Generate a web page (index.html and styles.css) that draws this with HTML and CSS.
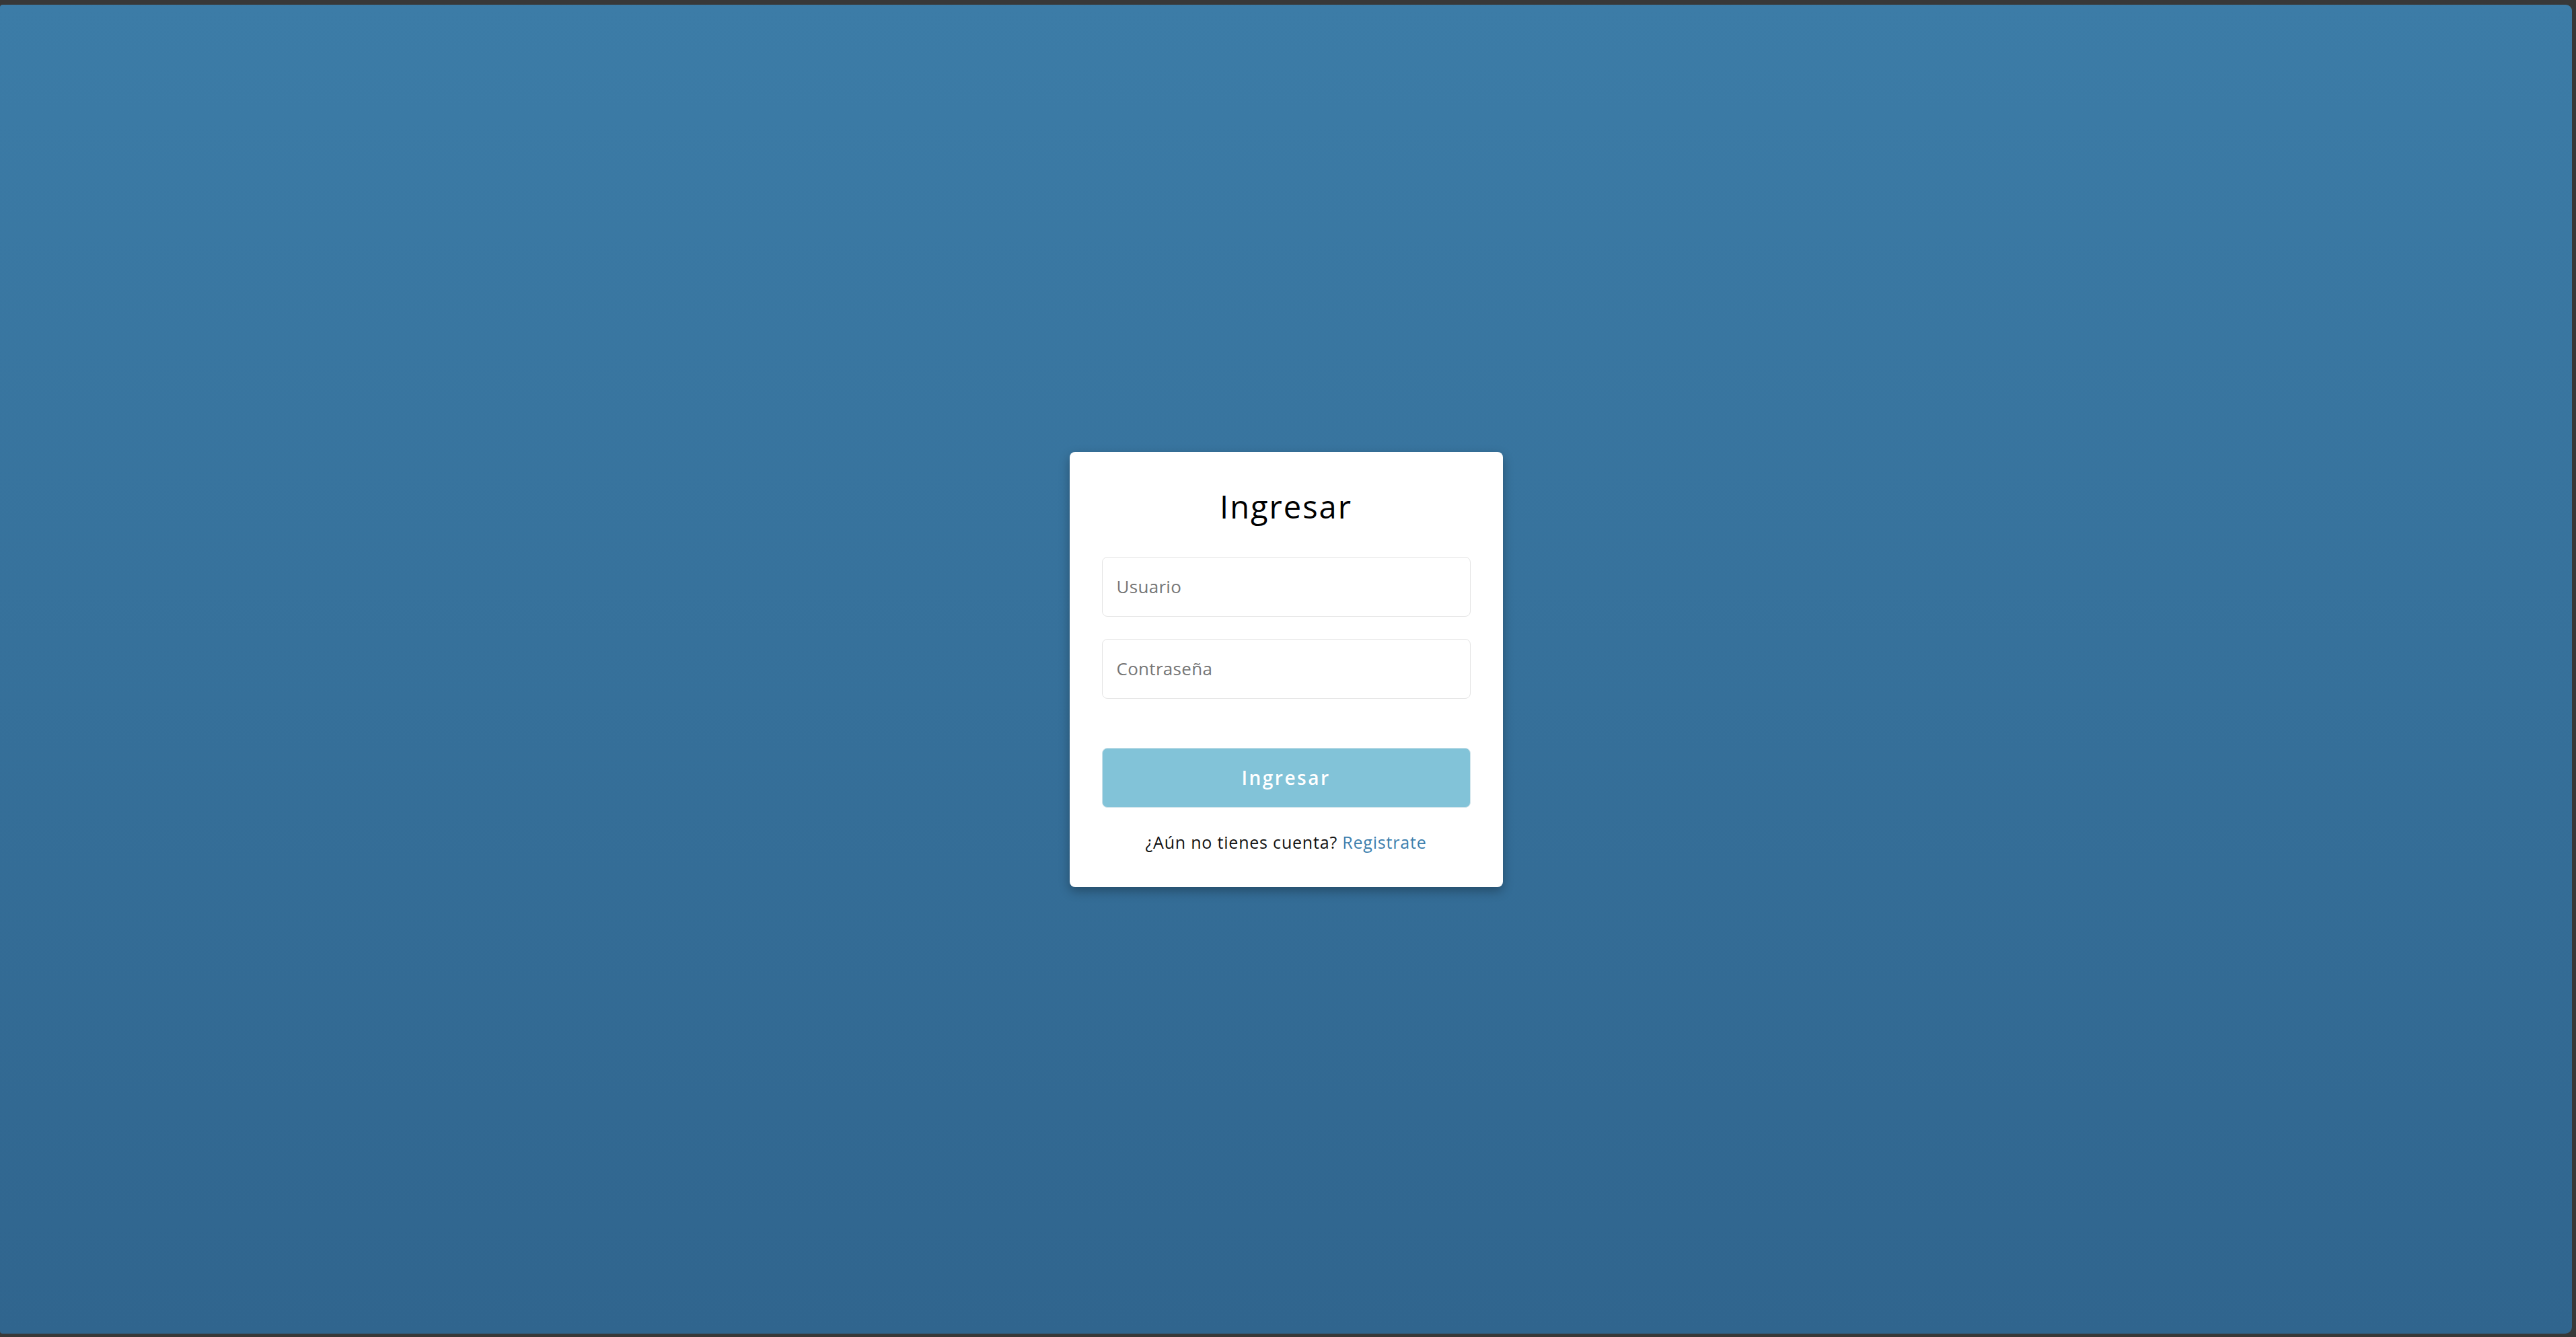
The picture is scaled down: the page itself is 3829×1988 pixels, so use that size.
FILE: index.html
```html
<!DOCTYPE html>
<html lang="es">
<head>
<meta charset="utf-8">
<title>Ingresar</title>
<link rel="stylesheet" href="styles.css">
</head>
<body>
<main class="screen">
  <form class="card">
    <h1 class="title">Ingresar</h1>
    <input class="field" type="text" placeholder="Usuario">
    <input class="field field-pass" type="password" placeholder="Contraseña">
    <button class="submit" type="button">Ingresar</button>
    <p class="signup">¿Aún no tienes cuenta? <a class="signup-link" href="#">Registrate</a></p>
  </form>
</main>
</body>
</html>
```
FILE: styles.css
```css
html, body {
  height: 100%;
}
body {
  margin: 0;
  padding: 7px 6px 5px 0;
  box-sizing: border-box;
  background: #383838;
  font-family: "Open Sans", "Liberation Sans", sans-serif;
}
.screen {
  height: 100%;
  border-radius: 4px 9px 10px 4px;
  background: linear-gradient(180deg, #3c7ca7 0%, #30658e 100%);
  display: flex;
  align-items: center;
  justify-content: center;
}
.card {
  width: 644px;
  box-sizing: border-box;
  padding: 51px 48px 49px;
  background: #ffffff;
  border-radius: 8px;
  box-shadow: 0 6px 16px rgba(0, 0, 0, 0.3);
  display: flex;
  flex-direction: column;
}
.title {
  margin: 0 0 45px;
  font-size: 47px;
  line-height: 60px;
  font-weight: 500;
  letter-spacing: 2px;
  text-align: center;
  color: #000;
}
.field {
  display: block;
  width: 100%;
  height: 89px;
  box-sizing: border-box;
  margin: 0;
  padding: 0 21px;
  border: 1px solid #e4e4e4;
  border-radius: 8px;
  background: #fff;
  font-family: "Open Sans", "Liberation Sans", sans-serif;
  font-size: 26px;
  letter-spacing: 0.3px;
  color: #222;
  outline: none;
}
.field::placeholder {
  color: #767676;
}
.field-pass {
  margin-top: 33px;
}
.submit {
  display: block;
  width: 100%;
  height: 89px;
  margin: 73px 0 0;
  border: 1px solid #cfe3ea;
  border-radius: 8px;
  background: #82c3d8;
  color: #ffffff;
  font-family: "Open Sans", "Liberation Sans", sans-serif;
  font-size: 28px;
  font-weight: 600;
  letter-spacing: 2.5px;
}
.signup {
  margin: 33px 0 0;
  font-size: 25px;
  line-height: 36px;
  letter-spacing: 0.8px;
  text-align: center;
  color: #111;
}
.signup-link {
  color: #3d7fae;
  text-decoration: none;
}
```
